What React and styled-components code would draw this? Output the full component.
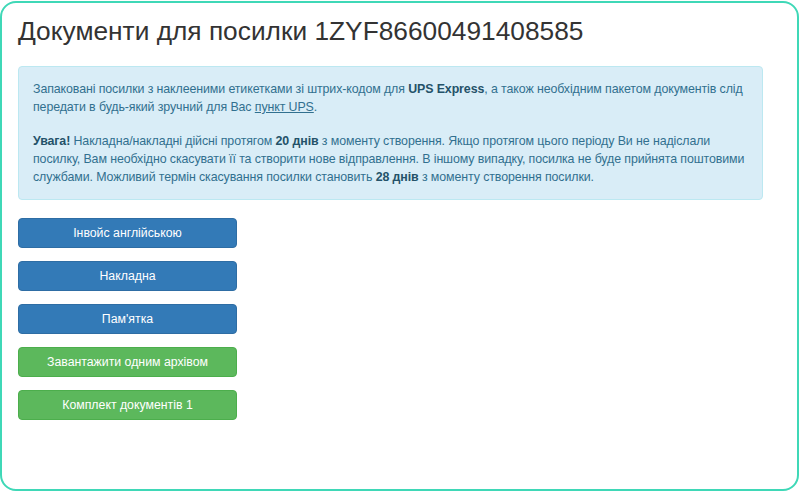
import React from 'react'
import styled, { createGlobalStyle } from 'styled-components'

const GlobalStyle = createGlobalStyle`
  html, body {
    margin: 0;
    padding: 0;
    background: #fff;
  }
  body {
    font-family: "Liberation Sans", Arial, Helvetica, sans-serif;
    color: #333;
  }
  * { box-sizing: border-box; }
`

const Frame = styled.div`
  width: 799px;
  height: 490px;
  margin-top: 1px;
  border: 2px solid #3fd8b7;
  border-radius: 16px;
  padding: 0 34px 0 16px;
`

const Title = styled.h2`
  margin: 13px 0 20px 0;
  font-size: 26.3px;
  font-weight: 400;
  line-height: 30px;
  color: #333;
`

const Alert = styled.div`
  background: #d9edf7;
  border: 1px solid #bce8f1;
  border-radius: 4px;
  padding: 13px 14px 13px 14px;
  color: #31708f;
  font-size: 12.4px;
  letter-spacing: -0.1px;
  line-height: 18px;

  p {
    margin: 0;
  }
  p + p {
    margin-top: 16px;
  }
  b {
    font-weight: 700;
    color: #245269;
  }
  a {
    color: #31708f;
    text-decoration: underline;
  }
`

const Buttons = styled.div`
  display: flex;
  flex-direction: column;
  gap: 13px;
  width: 219px;
  margin-top: 18px;
`

const Button = styled.button`
  height: 30px;
  border-radius: 4px;
  border: 1px solid ${p => (p.$kind === 'success' ? '#4cae4c' : '#2e6da4')};
  background: ${p => (p.$kind === 'success' ? '#5cb85c' : '#337ab7')};
  color: #fff;
  font-family: "Liberation Sans", Arial, Helvetica, sans-serif;
  font-size: 12.3px;
  cursor: pointer;
  padding: 0 10px;
`

export default function App() {
  return (
    <>
      <GlobalStyle />
      <Frame>
        <Title>Документи для посилки 1ZYF86600491408585</Title>
        <Alert>
          <p>
            Запаковані посилки з наклееними етикетками зі штрих-кодом для <b>UPS Express</b>, а також
            необхідним пакетом документів слід передати в будь-який зручний для Вас <a href="#">пункт UPS</a>.
          </p>
          <p>
            <b>Увага!</b> Накладна/накладні дійсні протягом <b>20 днів</b> з моменту створення. Якщо
            протягом цього періоду Ви не надіслали посилку, Вам необхідно скасувати її та створити нове
            відправлення. В іншому випадку, посилка не буде прийнята поштовими службами. Можливий термін
            скасування посилки становить <b>28 днів</b> з моменту створення посилки.
          </p>
        </Alert>
        <Buttons>
          <Button>Інвойс англійською</Button>
          <Button>Накладна</Button>
          <Button>Пам'ятка</Button>
          <Button $kind="success">Завантажити одним архівом</Button>
          <Button $kind="success">Комплект документів 1</Button>
        </Buttons>
      </Frame>
    </>
  )
}
